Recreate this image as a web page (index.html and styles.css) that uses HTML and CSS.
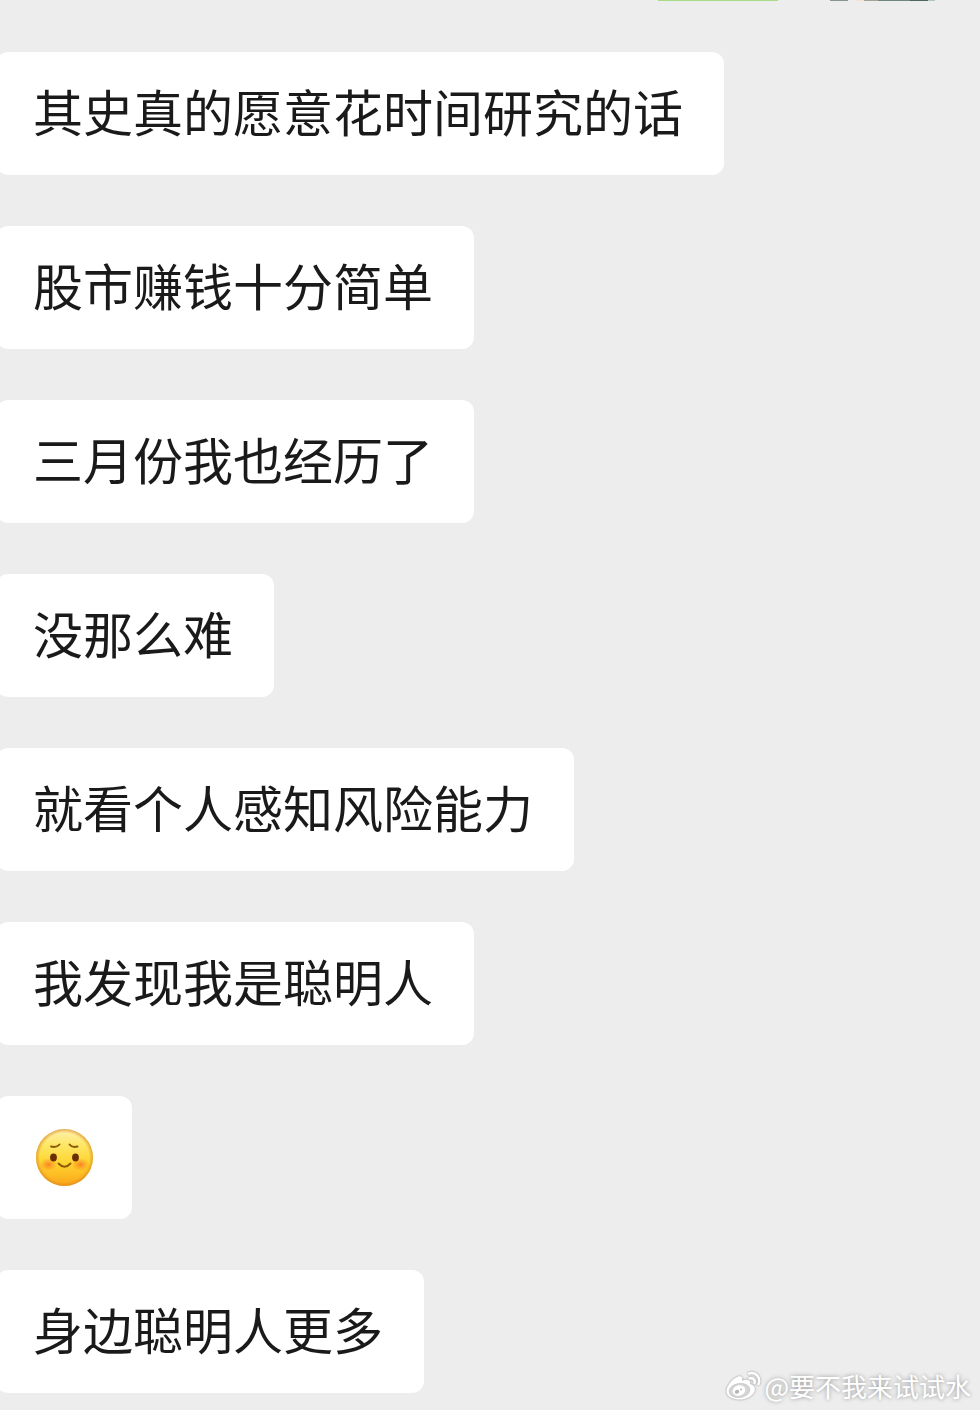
FILE: index.html
```html
<!DOCTYPE html>
<html lang="zh-CN">
<head>
    <meta charset="UTF-8">
    <meta name="viewport" content="width=device-width, initial-scale=1.0">
    <title>聊天记录</title>
    <link rel="stylesheet" href="styles.css">
</head>
<body>
    <main class="chat">
        <div class="sent-row">
            <div class="sent-bubble"></div>
            <div class="sent-avatar"></div>
        </div>
        <div class="messages">
            <p class="bubble">其史真的愿意花时间研究的话</p>
            <p class="bubble">股市赚钱十分简单</p>
            <p class="bubble">三月份我也经历了</p>
            <p class="bubble">没那么难</p>
            <p class="bubble">就看个人感知风险能力</p>
            <p class="bubble">我发现我是聪明人</p>
            <div class="bubble emoji-bubble">
                <svg class="emoji" viewBox="0 0 58 58" role="img" aria-label="微笑">
                    <defs>
                        <linearGradient id="face" x1="0" y1="0" x2="0" y2="1">
                            <stop offset="0" stop-color="#fdf0b4"/>
                            <stop offset="0.25" stop-color="#fee86c"/>
                            <stop offset="0.6" stop-color="#fed52f"/>
                            <stop offset="1" stop-color="#fba419"/>
                        </linearGradient>
                        <radialGradient id="rim">
                            <stop offset="0.86" stop-color="#e08a1c" stop-opacity="0"/>
                            <stop offset="1" stop-color="#d98a22" stop-opacity="0.7"/>
                        </radialGradient>
                        <radialGradient id="blush">
                            <stop offset="0" stop-color="#fa6a22" stop-opacity="0.75"/>
                            <stop offset="1" stop-color="#fa7a22" stop-opacity="0"/>
                        </radialGradient>
                    </defs>
                    <circle cx="28.500" cy="28.500" r="28.500" fill="url(#face)"/>
                    <circle cx="28.500" cy="28.500" r="28.500" fill="url(#rim)"/>
                    <ellipse cx="12.500" cy="35.500" rx="9" ry="6.500" fill="url(#blush)"/>
                    <ellipse cx="44.500" cy="35.500" rx="9" ry="6.500" fill="url(#blush)"/>
                    <ellipse cx="17.500" cy="28.500" rx="3.400" ry="3.900" fill="#6b2e06"/>
                    <ellipse cx="39.500" cy="28.500" rx="3.400" ry="3.900" fill="#6b2e06"/>
                    <g fill="none" stroke="#8a5a0a" stroke-width="1.900" stroke-linecap="round">
                        <path d="M15 17.500Q20.500 19 23.500 15.500"/>
                        <path d="M41.500 17.500Q36 19 33.500 15.500"/>
                        <path d="M22.500 34.500Q28.500 41 34.500 34.500"/>
                    </g>
                </svg>
            </div>
            <p class="bubble">身边聪明人更多</p>
        </div>
        <div class="watermark">
            <svg class="weibo-logo" viewBox="0 0 36 30" aria-hidden="true">
                <path fill="#fff" d="M13 5.500C16 4.500 18 6 17 9.500C21 8 26 8 25 13C29 14 31 17 29.500 20.500C27 26 20 29 13 28.500C6 28 1 24.500 1.500 19.500C2 14 8 7.500 13 5.500Z"/>
                <ellipse cx="14.500" cy="19.500" rx="10.500" ry="7" fill="#d4d4d4" stroke="#bdbdbd" stroke-width="0.600" transform="rotate(-8 14.500 19.500)"/>
                <ellipse cx="14" cy="19.500" rx="6.500" ry="5.200" fill="#fff" transform="rotate(-15 14 19.500)"/>
                <ellipse cx="12" cy="20.800" rx="2.300" ry="1.900" fill="#b5b5b5" transform="rotate(-25 12 20.800)"/>
                <circle cx="16" cy="18.500" r="1" fill="#b5b5b5"/>
                <g fill="none" stroke="#fff" stroke-width="2.500" stroke-linecap="round">
                    <path d="M24 2.500C31 .500 36 6.500 33.500 13"/>
                    <path d="M24.500 7.500C28 6.500 30.500 9 29.500 12"/>
                </g>
            </svg>
            <span>@要不我来试试水</span>
        </div>
    </main>
</body>
</html>
```
FILE: styles.css
```css
* {
    box-sizing: border-box;
}

body {
    margin: 0;
    background-color: #ededed;
    color: #1a1a1a;
    font-family: "Noto Sans CJK SC", sans-serif;
}

.chat {
    position: relative;
    padding-bottom: 17px;
    overflow: hidden;
}

/* bottom edge of the message scrolled off above */
.sent-row {
    display: flex;
    justify-content: flex-end;
    gap: 52px;
    height: 1px;
    margin-bottom: 51px;
    padding-right: 45px;
}

.sent-bubble {
    width: 120px;
    background-color: #a6dc86;
}

.sent-avatar {
    width: 105px;
    background: linear-gradient(to right, #8b9391 0 18px, #ededed 18px 26px, #f5e2d3 26px 34px, #a5a29a 34px 48px, #6f8580 48px 80px, #4f6660 80px 98px, #b4c4be 98px);
}

.messages {
    display: flex;
    flex-direction: column;
    align-items: flex-start;
    gap: 51px;
}

.bubble {
    display: flex;
    align-items: center;
    min-height: 123px;
    margin: 0 0 0 -4px;
    padding: 21px 41px 28px 37px;
    background-color: #fff;
    border-radius: 12px;
    font-size: 50px;
    line-height: 74px;
}

.emoji-bubble {
    padding: 24px 38px 24px 40px;
}

.emoji {
    display: block;
    width: 58px;
    height: 58px;
}

.watermark {
    position: absolute;
    right: 9px;
    bottom: 5px;
    display: flex;
    align-items: center;
    gap: 3px;
    color: #fff;
    font-size: 26px;
    line-height: 38px;
    text-shadow: 0 0 4px rgba(0, 0, 0, 0.4);
}

.weibo-logo {
    width: 36px;
    height: 30px;
    filter: drop-shadow(0 0 1px rgba(0, 0, 0, 0.4));
}
```
